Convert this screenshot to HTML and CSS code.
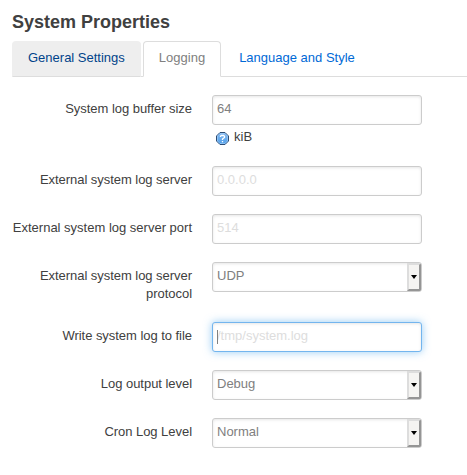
FILE: index.html
```html
<!DOCTYPE html>
<html lang="en">
<head>
<meta charset="utf-8">
<title>System Properties</title>
<link rel="stylesheet" href="styles.css">
</head>
<body>
<main>
  <h3>System Properties</h3>
  <nav class="tabs">
    <a class="tab hover">General Settings</a>
    <a class="tab active">Logging</a>
    <a class="tab">Language and Style</a>
  </nav>
  <form>
    <div class="row">
      <label for="size">System log buffer size</label>
      <div class="field">
        <input id="size" type="text" value="64">
        <div class="help">
          <svg width="13" height="13" viewBox="0 0 13 13">
            <defs><linearGradient id="g" x1="0" y1="0" x2="0" y2="1"><stop offset="0" stop-color="#85b9ef"/><stop offset="1" stop-color="#4f9fea"/></linearGradient></defs>
            <path d="M4 .5h5L12.500 4v5L9 12.500H4L.5 9V4z" fill="url(#g)" stroke="#2c4c74"/>
            <path d="M4 1.500h5L11.500 4v5L9 11.500H4L1.500 9V4z" fill="none" stroke="#9fcbf6" stroke-width=".7"/>
            <path d="M4.500 5V4.300L5.300 3.500H7.700L8.500 4.300V5.500L6.500 7V8M6.500 9v1.300" fill="none" stroke="#fff" stroke-width="1.300"/>
          </svg>
          <span>kiB</span>
        </div>
      </div>
    </div>
    <div class="row">
      <label for="ip">External system log server</label>
      <div class="field"><input id="ip" type="text" placeholder="0.0.0.0"></div>
    </div>
    <div class="row">
      <label class="wide" for="port">External system log server port</label>
      <div class="field"><input id="port" type="text" placeholder="514"></div>
    </div>
    <div class="row">
      <label for="proto">External system log server protocol</label>
      <div class="field"><select id="proto"><option>UDP</option></select><i class="arrow"></i></div>
    </div>
    <div class="row">
      <label for="file">Write system log to file</label>
      <div class="field"><input id="file" class="focused" type="text" placeholder="/tmp/system.log"><i class="caret"></i></div>
    </div>
    <div class="row">
      <label for="level">Log output level</label>
      <div class="field"><select id="level"><option>Debug</option></select><i class="arrow"></i></div>
    </div>
    <div class="row">
      <label for="cron">Cron Log Level</label>
      <div class="field"><select id="cron"><option>Normal</option></select><i class="arrow"></i></div>
    </div>
  </form>
</main>
</body>
</html>
```
FILE: styles.css
```css
* { box-sizing: border-box; }
body {
  margin: 0;
  background: #fff;
  color: #404040;
  font: 13px/18px "Liberation Sans", Arial, sans-serif;
}
main { padding: 4px 0 0 12px; }
h3 {
  margin: 0;
  height: 37px;
  font-size: 18px;
  line-height: 36px;
}
.tabs {
  display: flex;
  height: 36px;
  margin-bottom: 18px;
  border-bottom: 1px solid #ddd;
}
.tab {
  height: 36px;
  margin-right: 2px;
  padding: 0 15px;
  border: 1px solid transparent;
  border-radius: 4px 4px 0 0;
  line-height: 32px;
  color: #0069d6;
  white-space: nowrap;
}
.tab.hover {
  background: #eee;
  border-color: #eee #eee #ddd;
  color: #00438a;
}
.tab.active {
  background: #fff;
  border-color: #ddd #ddd #fff;
  color: #808080;
}
.row { display: flex; margin-bottom: 18px; }
label {
  width: 180px;
  margin-right: 20px;
  padding: 5px 0 1px;
  text-align: right;
  letter-spacing: -.04px;
}
label.wide { letter-spacing: 0; }
.field { position: relative; width: 210px; }
input, select {
  display: block;
  width: 210px;
  height: 30px;
  margin: 0;
  padding: 4px 4px 6px;
  appearance: none;
  background: #fff;
  border: 1px solid #ccc;
  border-radius: 3px;
  box-shadow: inset 0 1px 3px rgba(0, 0, 0, .1);
  color: #808080;
  font: inherit;
  outline: 0;
}
input { padding: 3px 4px 7px; }
input::placeholder { color: #ddd; opacity: 1; }
.focused {
  border-color: #73b5ee;
  box-shadow: inset 0 1px 3px rgba(0, 0, 0, .1), 0 0 8px rgba(82, 168, 236, .6);
}
.caret {
  position: absolute;
  top: 8px;
  left: 5px;
  width: 1px;
  height: 14px;
  background: #808080;
}
.arrow {
  position: absolute;
  top: 1px;
  right: 1px;
  width: 14px;
  height: 28px;
  background: #f5f4f2;
  border: 2px solid;
  border-color: #ddd #959595 #959595 #ddd;
  border-radius: 0 2px 2px 0;
}
.arrow::after {
  content: "";
  position: absolute;
  top: 10px;
  left: 2px;
  border: 3px solid transparent;
  border-top: 4px solid #000;
  border-bottom: 0;
}
.help {
  display: flex;
  height: 23px;
  padding: 3px 0 0 4px;
}
.help svg { margin: 4px 5px 0 0; }
```
